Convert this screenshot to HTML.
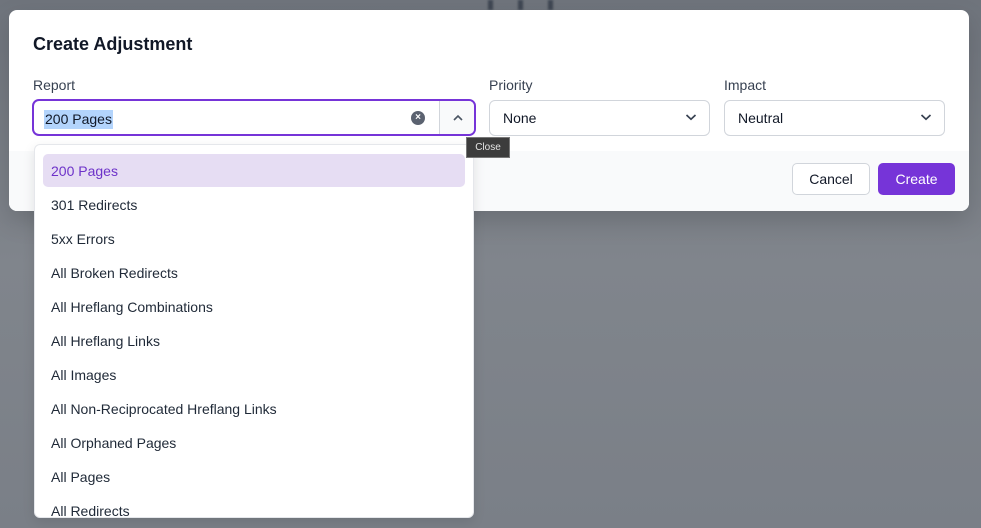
<!DOCTYPE html>
<html><head><style>
*{box-sizing:border-box;margin:0;padding:0}
body{width:981px;height:528px;overflow:hidden;position:relative;font-family:"Liberation Sans",Arial,sans-serif;background:linear-gradient(180deg,#6f747c 0%,#80858c 50%,#7a7f87 100%);}
.ln{position:absolute;top:0;height:10px;width:5px;background:#3f4753;filter:blur(1px)}
.modal{position:absolute;left:9px;top:10px;width:960px;height:201px;background:#fff;border-radius:8px;overflow:hidden;box-shadow:0 10px 25px rgba(0,0,0,.15)}
.foot{position:absolute;left:0;right:0;top:141px;bottom:0;background:#f9fafb}
h1{position:absolute;left:24px;top:24px;font-size:18px;font-weight:bold;color:#111827}
.lbl{position:absolute;top:67px;font-size:14px;color:#374151}
.sel{position:absolute;top:90px;height:36px;border:1px solid #d1d5db;border-radius:6px;background:#fff;font-size:14px;color:#111827;padding:9px 13px}
.sel svg{position:absolute;right:12px;top:12px}
.btn{position:absolute;top:153px;height:32px;border-radius:5px;font-size:14px;text-align:center;line-height:30px}
.dd{position:absolute;left:34px;top:144px;width:440px;height:374px;background:#fff;border:1px solid #e5e7eb;border-radius:6px;overflow:hidden;box-shadow:0 4px 12px rgba(0,0,0,.1)}
.it{position:absolute;left:8px;width:422px;height:33px;line-height:35px;padding-left:8px;font-size:14px;color:#1f2937;border-radius:5px}
</style></head><body>
<div class="ln" style="left:488px"></div><div class="ln" style="left:518px"></div><div class="ln" style="left:548px"></div>
<div class="modal">
<div class="foot"></div>
<h1>Create Adjustment</h1>
<div class="lbl" style="left:24px">Report</div>
<div class="lbl" style="left:480px">Priority</div>
<div class="lbl" style="left:715px">Impact</div>
<div style="position:absolute;left:23px;top:89px;width:444px;height:37px;border:2px solid #7634d8;border-radius:7px;background:#fff">
 <span style="position:absolute;left:10px;top:9px;font-size:14px;color:#111827;background:#b3d4fc;padding:1px 1px;line-height:17px">200 Pages</span>
 <div style="position:absolute;left:377px;top:10px;width:14px;height:14px;border-radius:50%;background:#5b6270;color:#fff;font-size:10px;line-height:14px;text-align:center;font-weight:bold">×</div>
 <div style="position:absolute;left:405px;top:0;width:35px;height:33px;border-left:1px solid #d1d5db;background:#f9fafb;border-radius:0 5px 5px 0">
  <svg width="12" height="8" style="position:absolute;left:12px;top:13px" viewBox="0 0 12 8"><path d="M2 6L6 2L10 6" stroke="#4b5563" stroke-width="1.6" fill="none"/></svg>
 </div>
</div>
<div class="sel" style="left:480px;width:221px">None<svg width="12" height="8" viewBox="0 0 12 8"><path d="M1.5 2L6 6.2L10.5 2" stroke="#374151" stroke-width="1.7" fill="none"/></svg></div>
<div class="sel" style="left:715px;width:221px">Neutral<svg width="12" height="8" viewBox="0 0 12 8"><path d="M1.5 2L6 6.2L10.5 2" stroke="#374151" stroke-width="1.7" fill="none"/></svg></div>
<div class="btn" style="left:783px;width:78px;background:#fff;border:1px solid #d1d5db;color:#111827">Cancel</div>
<div class="btn" style="left:869px;width:77px;background:#7634d8;color:#fff;line-height:32px">Create</div>
</div>
<div class="dd">
<div class="it" style="top:9px;background:#e6ddf3;color:#6d32c9">200 Pages</div>
<div class="it" style="top:43px">301 Redirects</div>
<div class="it" style="top:77px">5xx Errors</div>
<div class="it" style="top:111px">All Broken Redirects</div>
<div class="it" style="top:145px">All Hreflang Combinations</div>
<div class="it" style="top:179px">All Hreflang Links</div>
<div class="it" style="top:213px">All Images</div>
<div class="it" style="top:247px">All Non-Reciprocated Hreflang Links</div>
<div class="it" style="top:281px">All Orphaned Pages</div>
<div class="it" style="top:315px">All Pages</div>
<div class="it" style="top:349px">All Redirects</div>
</div>
<div style="position:absolute;left:466px;top:137px;width:44px;height:21px;background:#3c3c3c;border:1px solid #777;color:#e5e5e5;font-size:10px;line-height:19px;text-align:center">Close</div>
</body></html>
